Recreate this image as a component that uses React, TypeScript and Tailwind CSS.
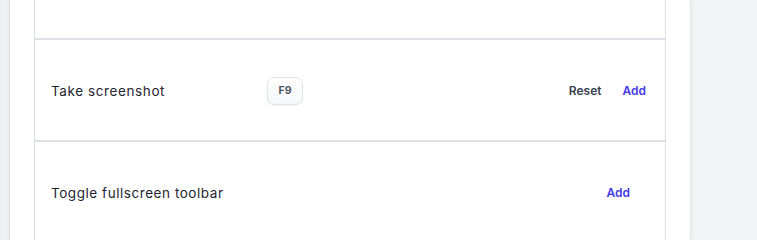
import React from "react";

export default function App() {
  const font = { fontFamily: "Inter, 'Noto Sans', sans-serif" };
  return (
    <div className="flex h-screen min-h-[203px] w-full overflow-hidden bg-[#f2f3f5]" style={font}>
      <div className="w-[10px] shrink-0 bg-[#eef0f3]" />
      <div className="w-[680px] shrink-0 bg-white px-[24px] shadow-[0_0_3px_rgba(0,0,0,0.18)]">
        <div className="-mt-[63px] flex flex-col">
          <div className="h-[102px] border border-[#dcdfe4]" />
          <div className="flex h-[102px] items-center border border-[#dcdfe4] pl-[16px] pr-[19px] pt-[2px]">
            <div className="w-[216px] text-[13.5px] tracking-[0.6px] text-[#1f2430]">Take screenshot</div>
            <div className="flex h-[28px] w-[36px] items-center justify-center rounded-[7px] border border-[#dfe2e7] bg-gradient-to-b from-white to-[#f6f7f9] text-[10.5px] font-bold text-[#4b5563] shadow-[0_1px_1px_rgba(0,0,0,0.04)]">
              F9
            </div>
            <div className="flex-1" />
            <button className="text-[12px] font-semibold text-[#374151]">Reset</button>
            <button className="ml-[21px] text-[12px] font-semibold text-[#4338e6]">Add</button>
          </div>
          <div className="flex h-[102px] items-center border border-[#dcdfe4] pl-[16px] pr-[35px] pt-[2px]">
            <div className="text-[13.5px] tracking-[0.55px] text-[#1f2430]">Toggle fullscreen toolbar</div>
            <div className="flex-1" />
            <button className="text-[12px] font-semibold text-[#4338e6]">Add</button>
          </div>
        </div>
      </div>
      <div className="flex-1" />
    </div>
  );
}
